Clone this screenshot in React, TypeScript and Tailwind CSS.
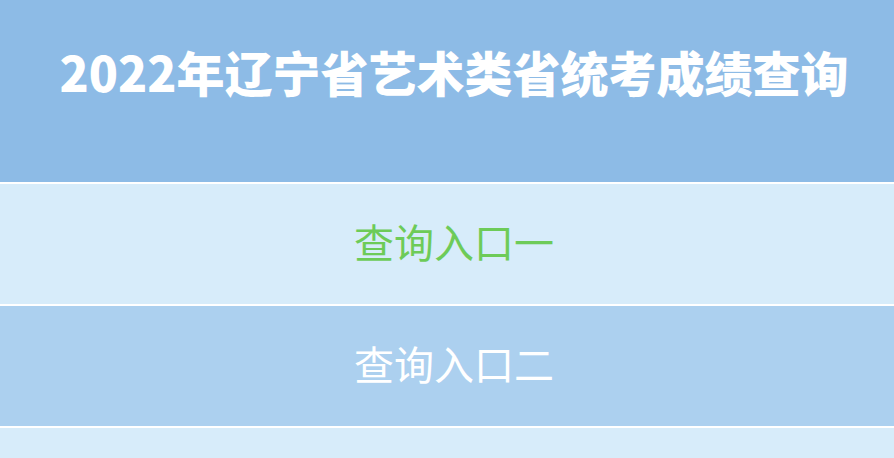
const entries = [
  { label: '查询入口一', bg: 'bg-[#d7ecfa]', color: 'text-[#6dcb58]' },
  { label: '查询入口二', bg: 'bg-[#acd0ef]', color: 'text-white' },
  { label: '查询入口三', bg: 'bg-[#d7ecfa]', color: 'text-[#6dcb58]' },
];

export default function App() {
  return (
    <div
      className="w-full h-screen overflow-hidden bg-white flex flex-col gap-[2px]"
      style={{ fontFamily: '"Microsoft YaHei", "Noto Sans CJK SC", sans-serif' }}
    >
      <div className="h-[182px] shrink-0 bg-[#8dbbe6] flex justify-center pl-[14px] pt-[41px]">
        <h1 className="text-[48px] leading-[60px] font-black text-white">2022年辽宁省艺术类省统考成绩查询</h1>
      </div>
      {entries.map((e) => (
        <a
          key={e.label}
          href="#"
          className={`h-[120px] ${e.bg} flex items-center justify-center pl-[14px] pb-[6px] shrink-0`}
        >
          <span className={`text-[40px] leading-none ${e.color}`}>{e.label}</span>
        </a>
      ))}
    </div>
  );
}
